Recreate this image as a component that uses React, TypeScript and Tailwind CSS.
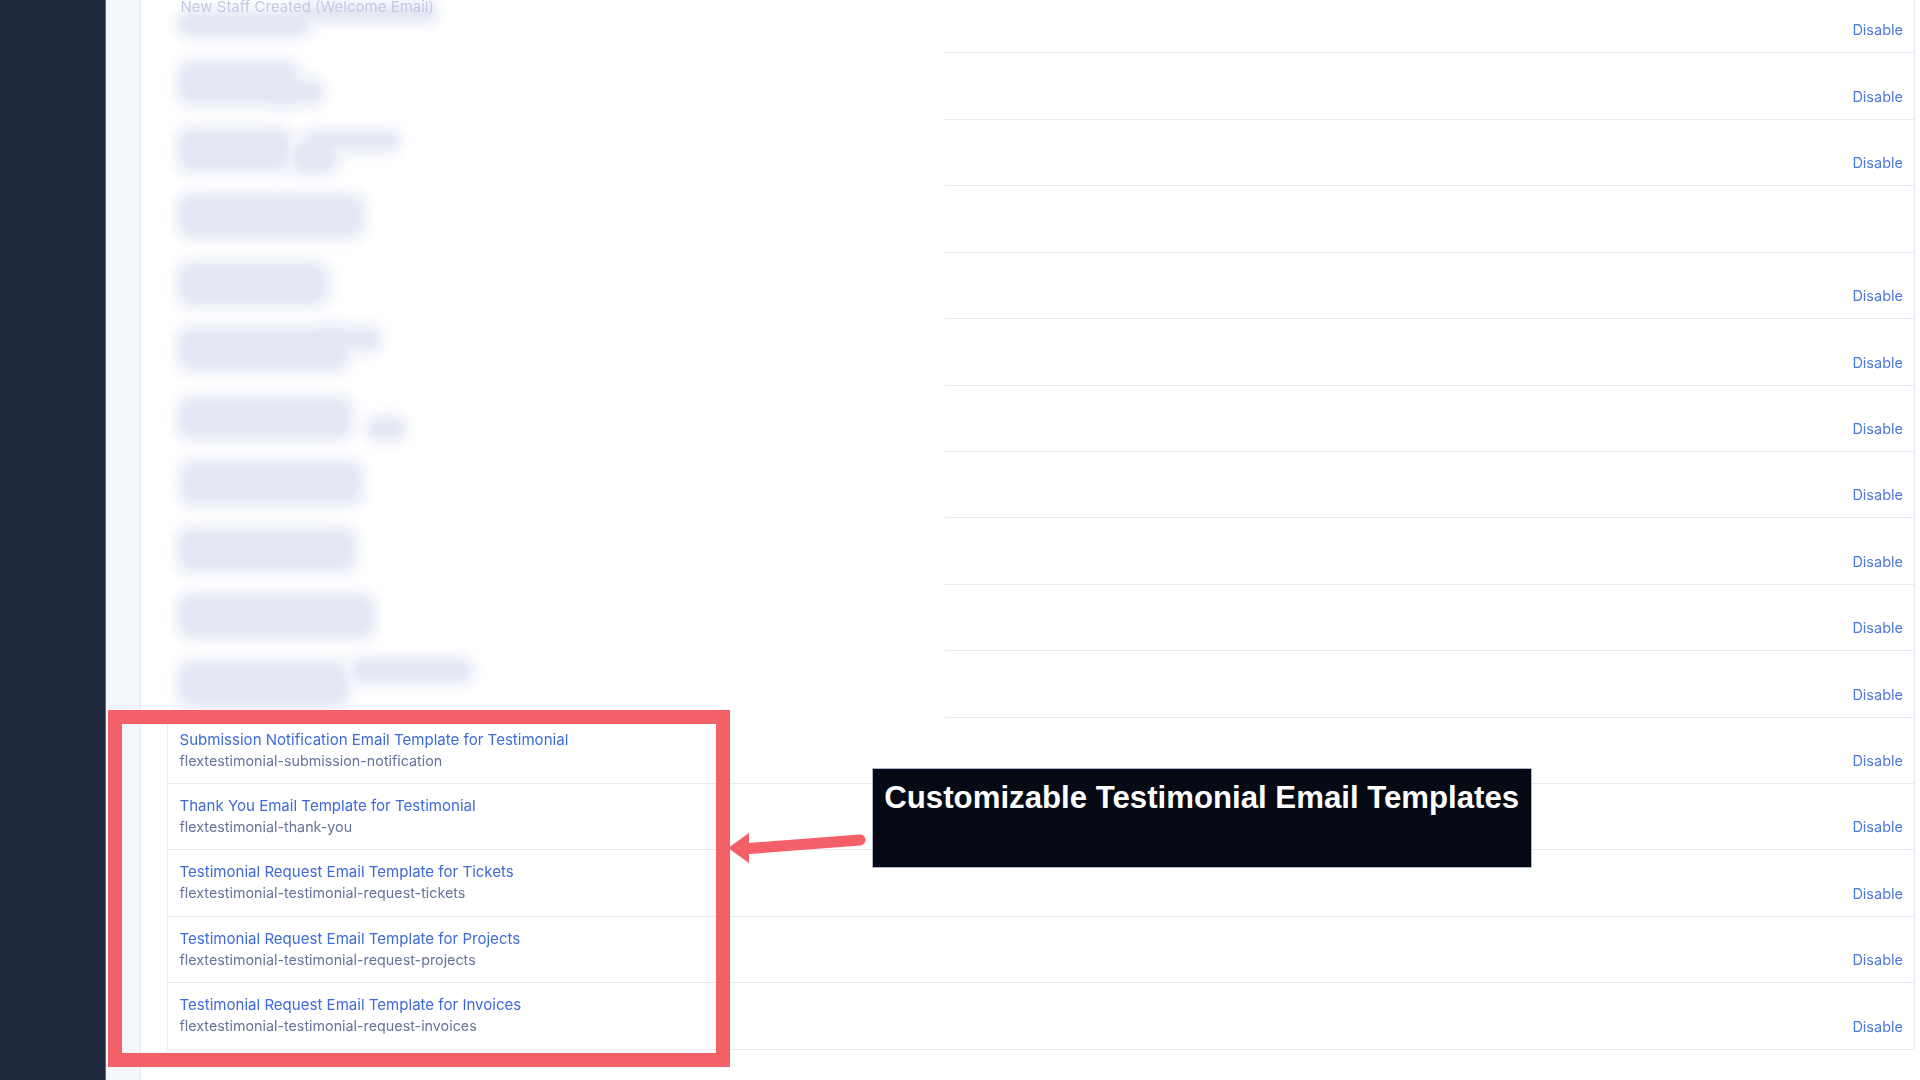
const blurred: { disable: boolean; blobs: { x: number; y: number; w: number; h: number }[] }[] = [
  { disable: true, blobs: [{ x: 13, y: 27, w: 126, h: 20 }, { x: 130, y: 21, w: 135, h: 11 }] },
  { disable: true, blobs: [{ x: 13, y: 11, w: 115, h: 38 }, { x: 100, y: 29, w: 52, h: 20 }] },
  { disable: true, blobs: [{ x: 13, y: 11, w: 108, h: 38 }, { x: 138, y: 14, w: 90, h: 14 }, { x: 125, y: 23, w: 42, h: 28 }] },
  { disable: false, blobs: [{ x: 13, y: 11, w: 180, h: 38 }] },
  { disable: true, blobs: [{ x: 13, y: 12, w: 144, h: 38 }] },
  { disable: true, blobs: [{ x: 13, y: 11, w: 165, h: 38 }, { x: 150, y: 11, w: 60, h: 18 }] },
  { disable: true, blobs: [{ x: 13, y: 14, w: 168, h: 36 }, { x: 202, y: 34, w: 32, h: 17 }] },
  { disable: true, blobs: [{ x: 15, y: 12, w: 176, h: 38 }] },
  { disable: true, blobs: [{ x: 13, y: 13, w: 172, h: 38 }] },
  { disable: true, blobs: [{ x: 13, y: 12, w: 190, h: 38 }] },
  { disable: true, blobs: [{ x: 13, y: 13, w: 165, h: 40 }, { x: 185, y: 10, w: 116, h: 19 }] },
];

const visible = [
  ["Submission Notification Email Template for Testimonial", "flextestimonial-submission-notification"],
  ["Thank You Email Template for Testimonial", "flextestimonial-thank-you"],
  ["Testimonial Request Email Template for Tickets", "flextestimonial-testimonial-request-tickets"],
  ["Testimonial Request Email Template for Projects", "flextestimonial-testimonial-request-projects"],
  ["Testimonial Request Email Template for Invoices", "flextestimonial-testimonial-request-invoices"],
];

function Disable() {
  return <span className="text-[14.5px] leading-[18px] text-[#4f78dc] blur-[0.4px]">Disable</span>;
}

export default function App() {
  return (
    <div className="relative flex h-[1080px] w-[1920px] overflow-hidden bg-white font-['Inter',sans-serif]">
      <aside className="w-[106px] shrink-0 border-r border-[#5c6678] bg-[#1f2a3d]" />
      <div className="w-[35px] shrink-0 border-r border-[#e5eaf5] bg-[#f3f6fb]" />
      <main className="min-w-0 flex-1 pl-[26px] pr-[5px]">
        <div className="-mt-[13px] border-x border-[#e6ebf5]">
          {blurred.map((row, i) => (
            <div key={i} className="relative flex h-[66.43px] items-end justify-end border-b border-[#e6ebf5] pb-[13px] pr-[11px]">
              <div className="absolute -bottom-px -left-[27px] top-0 w-[804px] bg-white/95">
                {row.blobs.map((b, j) => (
                  <div
                    key={`halo-${j}`}
                    className="absolute rounded-[20px] bg-[#f1f3fa] blur-[4px]"
                    style={{ left: b.x + 27 - 9, top: b.y - 9, width: b.w + 18, height: b.h + 18 }}
                  />
                ))}
                {row.blobs.map((b, j) => (
                  <div
                    key={`core-${j}`}
                    className="absolute rounded-[14px] bg-[#e5e8f4] blur-[2.5px]"
                    style={{ left: b.x + 27, top: b.y, width: b.w, height: b.h }}
                  />
                ))}
                {i === 0 && (
                  <p className="absolute left-[39.5px] top-[11px] text-[15px] leading-[18px] text-[#c6c9e4] blur-[0.5px]">
                    New Staff Created (Welcome Email)
                  </p>
                )}
              </div>
              {row.disable && <Disable />}
            </div>
          ))}
          {visible.map(([title, slug]) => (
            <div key={slug} className="flex h-[66.43px] justify-between border-b border-[#e6ebf5] pl-[11.5px] pr-[11px]">
              <div className="flex flex-col pt-[12px]">
                <span className="text-[15.05px] leading-[20px] text-[#3f6bd8] blur-[0.4px]">{title}</span>
                <span className="mt-[1px] text-[14.3px] leading-[20px] text-[#65749a] blur-[0.4px]">{slug}</span>
              </div>
              <div className="flex items-end pb-[13px]">
                <Disable />
              </div>
            </div>
          ))}
        </div>
      </main>

      <div className="absolute left-[108px] top-[710px] h-[357px] w-[622px] border-[14.5px] border-[#f46067]" />

      <svg className="absolute left-[725px] top-[825px]" width="150" height="45" viewBox="0 0 150 45" fill="none">
        <path d="M3 23 L24 8 L24 38 Z" fill="#f46067" />
        <path d="M18 24 L135 15" stroke="#f46067" strokeWidth="11" strokeLinecap="round" />
      </svg>

      <div className="absolute left-[871.5px] top-[767.5px] h-[100.5px] w-[660.5px] border border-[#aab3cb] bg-[#050a14] pt-[9px] text-center font-['Liberation_Sans',sans-serif] text-[31.2px] font-bold leading-[40px] text-white">
        Customizable Testimonial Email Templates
      </div>
    </div>
  );
}
